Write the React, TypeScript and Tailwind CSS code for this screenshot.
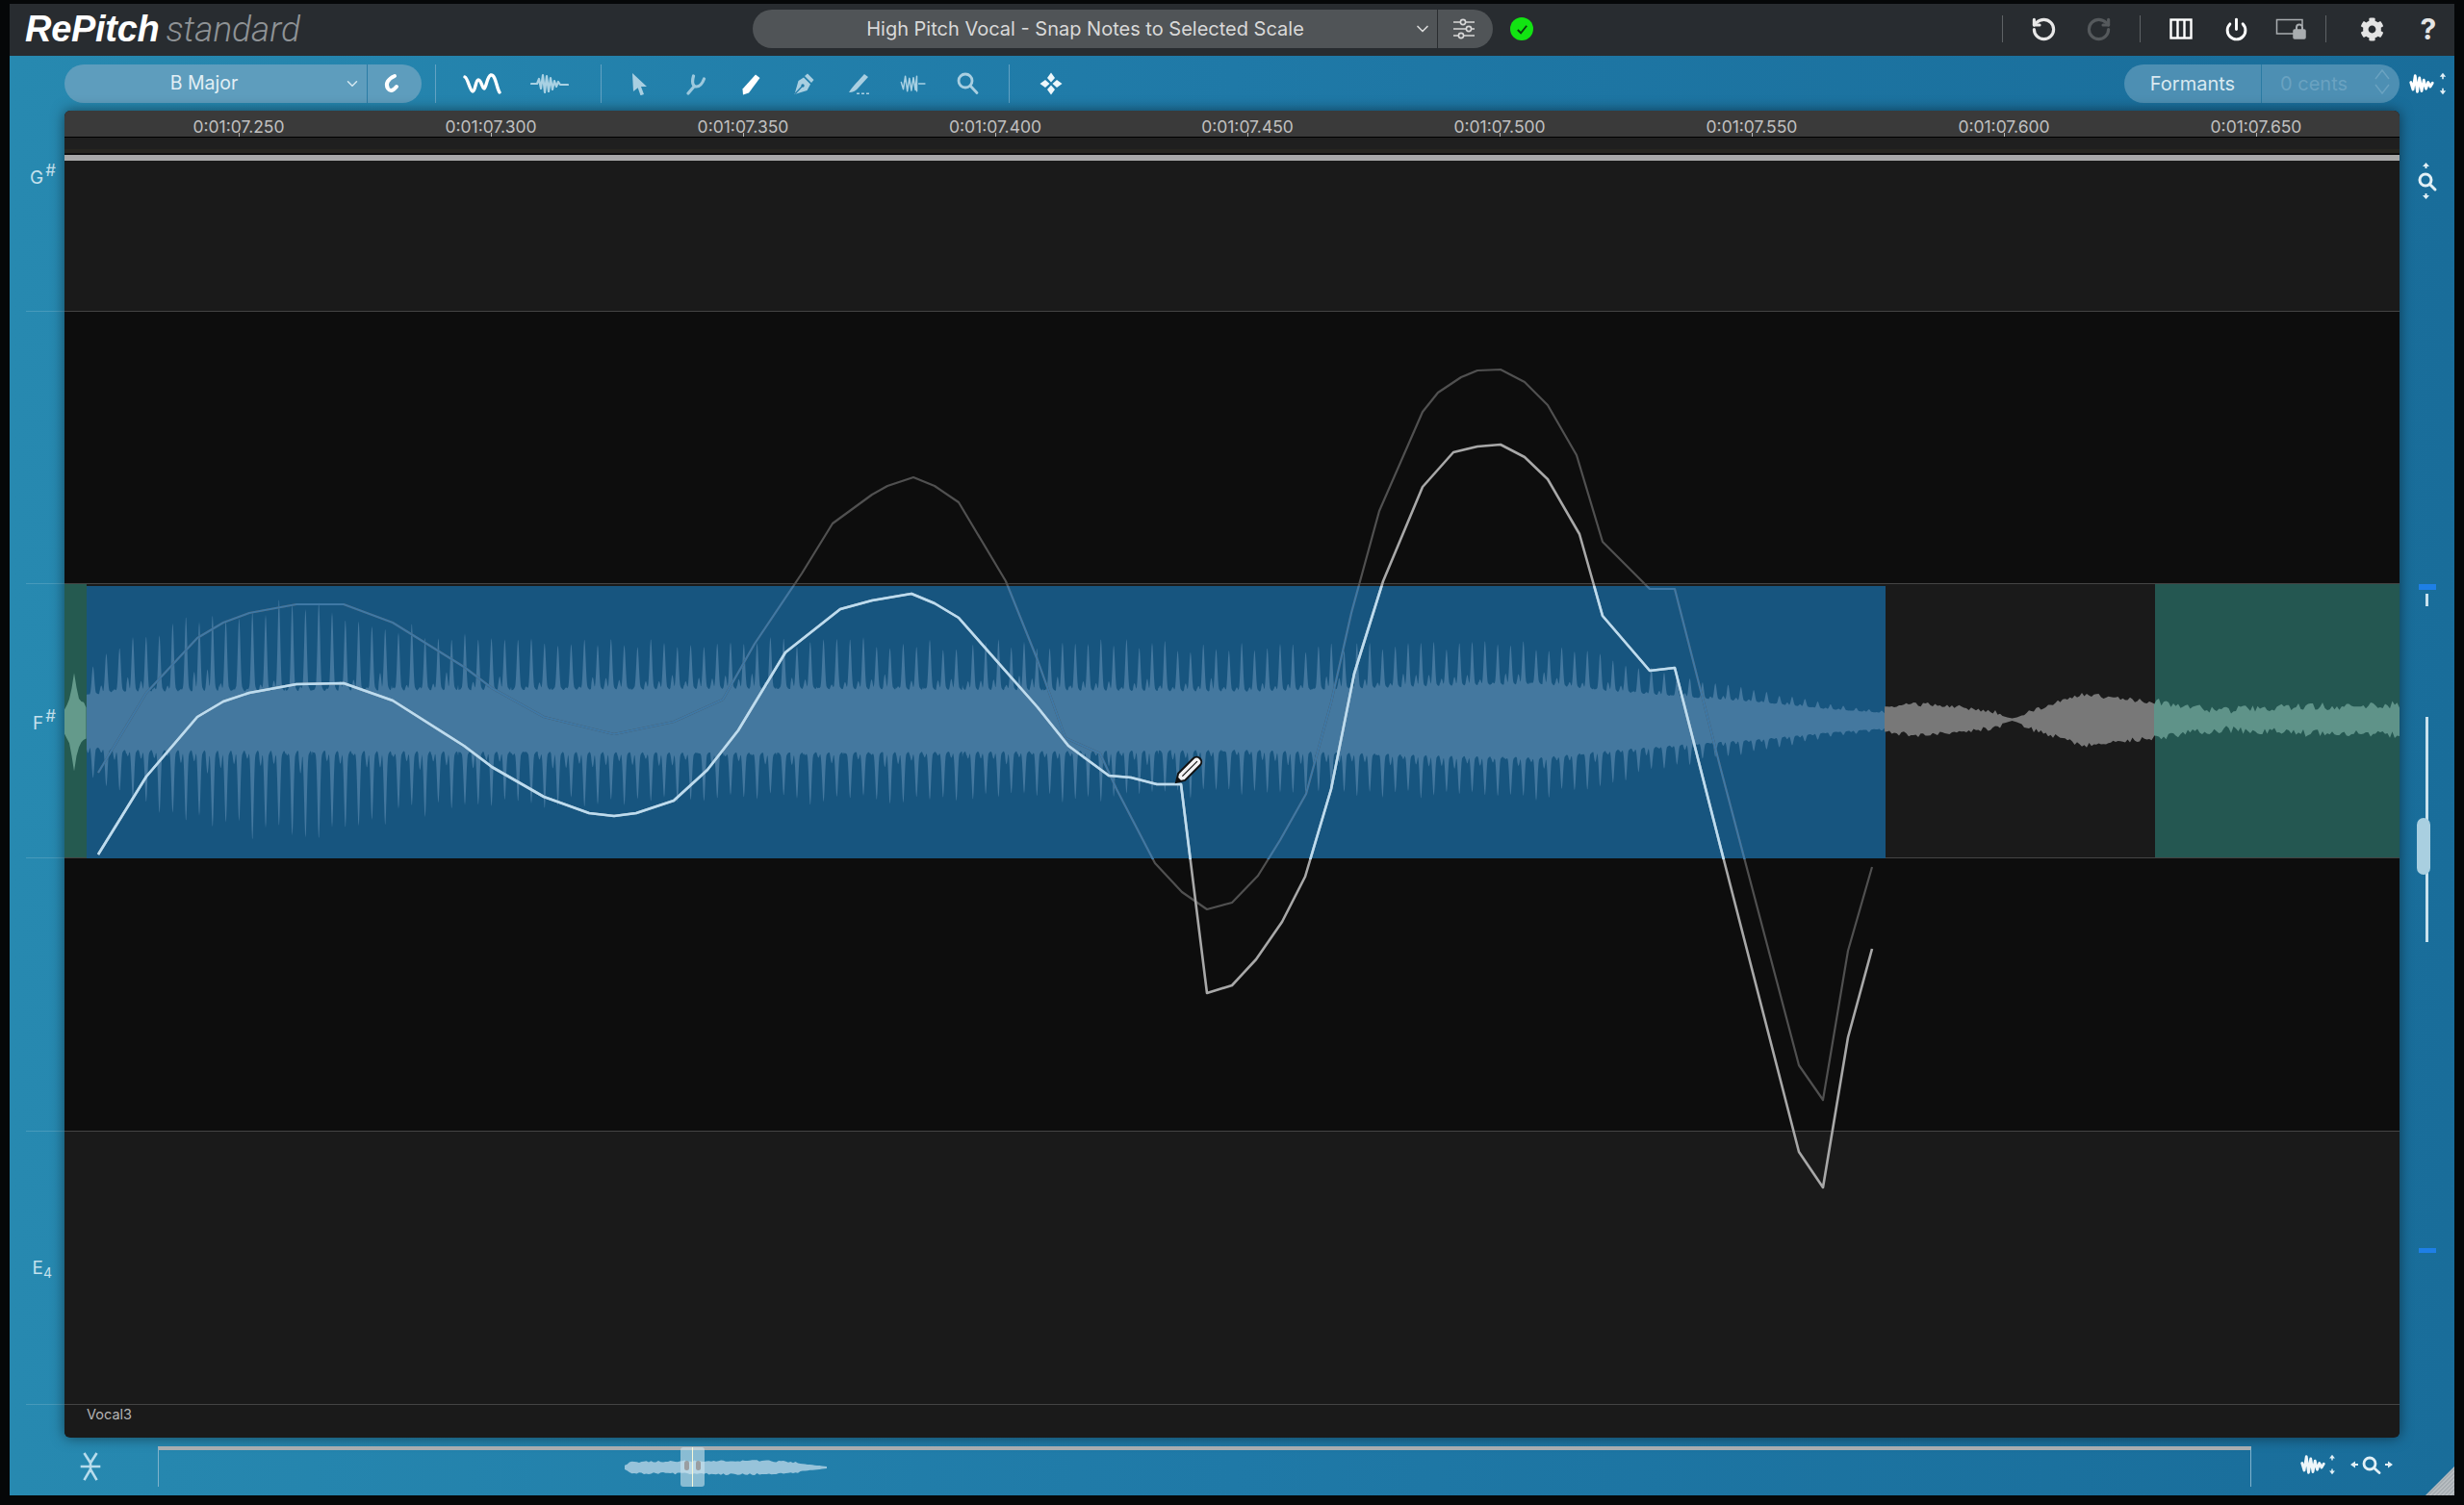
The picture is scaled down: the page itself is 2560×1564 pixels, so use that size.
import { ChevronDown, Power, RotateCcw, RotateCw } from 'lucide-react'
import { FaCog } from 'react-icons/fa'

type Pt = [number, number]

const noise = (i: number) => {
  const s = Math.sin(i * 12.9898) * 43758.5453
  return s - Math.floor(s)
}

const lerp = (keys: Pt[], x: number) => {
  if (x <= keys[0][0]) return keys[0][1]
  for (let i = 1; i < keys.length; i++) {
    if (x <= keys[i][0]) {
      const [x0, y0] = keys[i - 1]
      const [x1, y1] = keys[i]
      return y0 + ((y1 - y0) * (x - x0)) / (x1 - x0)
    }
  }
  return keys[keys.length - 1][1]
}

const line = (pts: Pt[]) => 'M' + pts.map(([x, y]) => `${x} ${y}`).join('L')

const CENTER = 750

const spikeAmp: Pt[] = [
  [90, 55], [110, 72], [150, 95], [200, 115], [260, 128], [300, 132], [340, 125], [400, 110], [450, 100],
  [500, 95], [600, 90], [700, 88], [800, 88], [900, 88], [1000, 84], [1100, 88], [1200, 84], [1300, 82],
  [1500, 84], [1600, 84], [1650, 74], [1700, 60], [1757, 46], [1830, 32], [1900, 18], [1958, 10],
]
const bodyAmp: Pt[] = [
  [90, 26], [120, 30], [800, 33], [1300, 30], [1500, 36], [1600, 38], [1680, 30], [1757, 24], [1830, 19], [1900, 12], [1958, 8],
]

// body plus pitch spikes, one edge at a time
const voicedEdge = (x: number, dir: number) => {
  const period = x < 1000 ? 13.8 : 13.3
  const k = Math.round(x / period)
  const c = Math.abs(Math.cos((Math.PI * x) / period))
  const c2 = Math.abs(Math.cos((Math.PI * (x + period * 0.38)) / period))
  const main = Math.pow(c, 11) * (0.78 + 0.22 * noise(k + dir * 31))
  const side = Math.pow(c2, 14) * 0.3 * noise(k * 3 + dir * 7)
  const base = Math.pow(c, 3) * 0.12
  const amp = lerp(spikeAmp, x)
  const body = lerp(bodyAmp, x)
  return CENTER - 1 - dir * (body + (amp - body) * Math.max(main, side, base))
}

const voicedPath = () => {
  const up: Pt[] = []
  const down: Pt[] = []
  for (let x = 90; x <= 1958; x += 0.5) {
    up.push([x, +voicedEdge(x, 1).toFixed(1)])
    down.unshift([x, +voicedEdge(x, -1).toFixed(1)])
  }
  return line([...up, ...down]) + 'Z'
}

const noisyPath = (from: number, to: number, keys: Pt[], cy: number, rough: number) => {
  const up: Pt[] = []
  const down: Pt[] = []
  for (let x = from; x <= to; x += 2.5) {
    const a = lerp(keys, x)
    const n = noise(Math.round(x) * 0.7) * rough * (a > 4 ? 1 : 0.1)
    const m = noise(Math.round(x) * 1.3) * rough * (a > 4 ? 1 : 0.1)
    up.push([x, +(cy - a - n).toFixed(1)])
    down.unshift([x, +(cy + a + m).toFixed(1)])
  }
  return line([...up, ...down]) + 'Z'
}

const grayEnv: Pt[] = [[1958, 11], [1975, 12], [2000, 14], [2050, 9], [2075, 5], [2091, 1], [2110, 7], [2130, 13], [2165, 24], [2200, 20], [2240, 16]]
const tealEnv: Pt[] = [[2240, 15], [2270, 10], [2310, 6], [2360, 8], [2400, 10], [2450, 10], [2493, 12]]
const headEnv: Pt[] = [[67, 12], [72, 22], [76, 40], [77, 50], [78, 40], [82, 24], [90, 14]]
const miniEnv: Pt[] = [[649, 2], [655, 5], [680, 5], [750, 6], [800, 6], [830, 4], [859, 1]]

const bright: Pt[] = [
  [102, 888], [152, 807], [205, 745], [232, 729], [259, 720], [308, 711], [357, 710], [408, 728], [482, 775],
  [511, 797], [565, 828], [612, 845], [638, 848], [661, 845], [700, 832], [735, 800], [767, 759], [816, 678],
  [873, 633], [906, 624], [947, 617], [971, 627], [996, 642], [1078, 735], [1110, 775], [1152, 806], [1175, 808], [1202, 815], [1227, 815],
  [1254, 1032], [1280, 1024], [1305, 997], [1332, 958], [1356, 911], [1383, 820], [1407, 700], [1437, 604],
  [1478, 506], [1510, 470], [1535, 464], [1559, 462], [1584, 475], [1608, 498], [1641, 555], [1665, 640], [1714, 697], [1740, 694],
  [1788, 882], [1869, 1197], [1894, 1234], [1920, 1078], [1945, 986],
]
const faint: Pt[] = [
  [102, 803], [152, 720], [205, 663], [232, 647], [259, 637], [308, 628], [357, 628], [408, 647], [482, 693],
  [511, 715], [565, 745], [638, 763], [700, 750], [751, 727], [784, 669], [833, 596], [865, 544], [906, 514], [922, 505],
  [949, 496], [971, 505], [996, 522], [1045, 604], [1078, 686], [1107, 767], [1143, 783], [1160, 820], [1200, 897], [1228, 927],
  [1254, 945], [1280, 938], [1307, 910], [1330, 873], [1357, 825], [1383, 730], [1404, 637], [1433, 531],
  [1478, 428], [1494, 408], [1518, 392], [1535, 385], [1559, 384], [1584, 397], [1608, 421], [1638, 473], [1665, 563], [1714, 612], [1740, 612],
  [1788, 800], [1869, 1107], [1894, 1143], [1920, 988], [1945, 901],
]

const Scribble = ({ className, d, sw = 2.2 }: { className?: string; d: string; sw?: number }) => (
  <svg viewBox="0 0 40 28" className={className} fill="none" stroke="currentColor" strokeWidth={sw} strokeLinejoin="round" strokeLinecap="round">
    <path d={d} />
  </svg>
)
const WAVE_LONG = 'M1 14H7L9 9 11 19 13 5 15 23 17 6 19 22 21 8 23 20 25 11 27 17 29 12 31 15H39'
const WAVE_NARROW = 'M5 12 8 22 11 3 14 25 17 6 20 24 23 9 26 21 29 12 32 18 35 13'

const ArrowsV = ({ className }: { className?: string }) => (
  <svg viewBox="0 0 10 30" className={className} fill="currentColor">
    <path d="M5 1 9 6H6v3H4V6H1zM5 29 1 24h3v-3h2v3h3z" />
  </svg>
)

const Pointer = () => (
  <svg viewBox="0 0 24 24" className="w-[24px] h-[24px] text-[#a9cfe1]" fill="currentColor">
    <path d="M5 1 20 15h-6l3 8-3.500 1.200-2.800-8L6 20z" />
  </svg>
)
const Fork = () => (
  <svg viewBox="0 0 24 24" className="w-[24px] h-[24px] text-[#9cc8dd]" fill="none" stroke="currentColor" strokeWidth="3.200" strokeLinecap="round">
    <path d="M4 22 10 15M9.500 4C7.500 11 9 15 12.500 15 16 15 19 11 20.500 7" />
  </svg>
)
const Pencil = () => (
  <svg viewBox="0 0 24 24" className="w-[24px] h-[24px] text-white" fill="currentColor">
    <path d="M17 2.500 21.500 6 10 21.500 4 23.500 3.500 17.500z" />
  </svg>
)
const Nib = () => (
  <svg viewBox="0 0 24 24" className="w-[24px] h-[24px]">
    <path d="M16 1.500 22.500 8 20 11 13 4zM12 5.500 19 12.500 15.500 19 2.500 23 6.500 9z" fill="#a9cfe1" />
    <path d="M3 22.500 10 15" stroke="#1f79a7" strokeWidth="1.200" />
    <circle cx="11" cy="14" r="1.700" fill="#1f79a7" />
  </svg>
)
const LineTool = () => (
  <svg viewBox="0 0 24 24" className="w-[24px] h-[24px] text-[#a9cfe1]" fill="currentColor">
    <path d="M18 2 22 5 12 16C10 19 6 21 2 21 5 16 8 13 18 2zM10 21.500h3V23h-3zM15 21.500h3V23h-3zM20 21.500h3V23h-3z" />
  </svg>
)
const Squiggle = () => (
  <svg viewBox="0 0 40 24" className="w-[40px] h-[24px]" fill="none" stroke="#fff" strokeWidth="3.400" strokeLinecap="round" strokeLinejoin="round">
    <path d="M2 5c3 1 5 14 8 15 3 0 3-12 6-12s4 9 6 9 3-13 7-14c5-1 6 14 9 18" />
  </svg>
)
const Move = () => (
  <svg viewBox="0 0 24 24" className="w-[26px] h-[26px] text-[#eef7fb]" fill="currentColor">
    <path d="M12 .500 16 6 12 10.500 8 6zM12 23.500 8 18l4-4.500 4 4.500zM.500 12 6 8l4.500 4L6 16zM23.500 12 18 16l-4.500-4L18 8z" />
  </svg>
)
const MagnifierIcon = () => (
  <svg viewBox="0 0 24 24" className="w-[25px] h-[25px] text-[#a9cfe1]" fill="none" stroke="currentColor" strokeWidth="2.800" strokeLinecap="round">
    <circle cx="10" cy="9.500" r="7" />
    <path d="M15.500 15 22 22" />
  </svg>
)
const SlidersIcon = () => (
  <svg viewBox="0 0 24 24" className="w-[24px] h-[24px] text-[#d8d8d8]" fill="none" stroke="currentColor" strokeWidth="1.600">
    <path d="M1 5h7M14 5h9M1 12h13M20 12h3M1 19h5M12 19h11" />
    <circle cx="11" cy="5" r="2.600" />
    <circle cx="17" cy="12" r="2.600" />
    <circle cx="9" cy="19" r="2.600" />
  </svg>
)
const ColumnsIcon = () => (
  <svg viewBox="0 0 24 24" className="w-[24px] h-[24px]" fill="none" stroke="#fff" strokeWidth="2.400">
    <rect x="1.500" y="2.500" width="21" height="19" />
    <path d="M8.500 3v18M15.500 3v18" />
  </svg>
)
const ScreenLock = () => (
  <svg viewBox="0 0 32 22" className="w-[32px] h-[22px] text-[#a9adb0]" fill="none" stroke="currentColor" strokeWidth="1.500">
    <path d="M20 16H1.500V1.500H28V8" />
    <rect x="19" y="12" width="12" height="9" rx="1" fill="currentColor" />
    <path d="M22 12V9.500a3 3 0 0 1 6 0V12" strokeWidth="2" />
  </svg>
)
const ZoomVertical = () => (
  <svg viewBox="0 0 24 40" className="w-[24px] h-[40px] text-[#e2f0f6]" fill="none" stroke="currentColor" strokeWidth="3" strokeLinecap="round">
    <path d="M10.500 1 14 5H11.500V7H9.500V5H7zM10.500 39 7 35H9.500V33H11.500V35H14z" fill="currentColor" stroke="none" />
    <circle cx="10" cy="19" r="6" />
    <path d="M15 24 20 29" />
  </svg>
)
const ZoomHorizontal = () => (
  <svg viewBox="0 0 46 20" className="w-[46px] h-[20px] text-[#e2f0f6]" fill="none" stroke="currentColor" strokeWidth="2.800" strokeLinecap="round">
    <path d="M1 10 6 6.500V9H9V11H6V13.500zM45 10 40 13.500V11H37V9H40V6.500z" fill="currentColor" stroke="none" />
    <circle cx="21" cy="9" r="6" />
    <path d="M26 14 31 18.500" />
  </svg>
)

const Divider = ({ className }: { className: string }) => <div className={`w-px shrink-0 ${className}`} />

const ToolSlot = ({ className, children }: { className: string; children: React.ReactNode }) => (
  <div className={`flex items-center justify-center shrink-0 ${className}`}>{children}</div>
)

const times = ['250', '300', '350', '400', '450', '500', '550', '600', '650']

const TopBar = () => (
  <div className="h-[54px] shrink-0 bg-[#282c30] flex items-center relative">
    <div className="ml-[16px] w-[756px] flex items-baseline gap-[7px] shrink-0 mb-[2px]">
      <span className="text-[38px] leading-none font-bold italic text-white tracking-[-0.3px] font-['Liberation_Sans',sans-serif]">RePitch</span>
      <span className="text-[37px] leading-none font-light italic text-[#8f9396] font-['Roboto',sans-serif]">standard</span>
    </div>
    <div className="w-[769px] h-[40px] rounded-full bg-[#505457] flex items-center shrink-0 mb-[2px]">
      <div className="w-[711px] relative flex items-center justify-center text-[20px] text-[#d9d9d9] pr-[20px]">
        <span>High Pitch Vocal - Snap Notes to Selected Scale</span>
        <ChevronDown className="absolute right-[5px] w-[20px] h-[20px] text-[#d9d9d9]" />
      </div>
      <Divider className="h-[40px] bg-[#2a2d30]" />
      <div className="flex-1 flex items-center justify-center pr-[4px]"><SlidersIcon /></div>
    </div>
    <div className="ml-[18px] w-[24px] h-[24px] rounded-full bg-[#12e412] flex items-center justify-center mb-[2px] shrink-0">
      <svg viewBox="0 0 16 16" className="w-[15px] h-[15px]" fill="none" stroke="#0b3a10" strokeWidth="2"><path d="M3 8.500 6.500 12 13 4" /></svg>
    </div>
    <Divider className="ml-[487px] h-[28px] bg-[#5e6265] mb-[2px]" />
    <ToolSlot className="w-[84px] h-[30px] mb-[2px]"><RotateCcw className="w-[27px] h-[27px] text-[#e8e8e8]" strokeWidth={2.800} /></ToolSlot>
    <ToolSlot className="w-[30px] h-[30px] mb-[2px]"><RotateCw className="w-[27px] h-[27px] text-[#55595c]" strokeWidth={2.800} /></ToolSlot>
    <Divider className="ml-[28px] h-[28px] bg-[#5e6265] mb-[2px]" />
    <ToolSlot className="w-[84px] h-[30px] mb-[2px]"><ColumnsIcon /></ToolSlot>
    <ToolSlot className="w-[30px] h-[30px] mb-[2px]"><Power className="w-[25px] h-[25px] text-white" strokeWidth={2.800} /></ToolSlot>
    <ToolSlot className="w-[42px] h-[30px] ml-[21px] mb-[2px]"><ScreenLock /></ToolSlot>
    <Divider className="ml-[15px] h-[28px] bg-[#5e6265] mb-[2px]" />
    <ToolSlot className="w-[94px] h-[30px] mb-[2px]"><FaCog className="w-[25px] h-[25px] text-[#e4e4e4]" /></ToolSlot>
    <span className="w-[24px] text-center text-[30px] leading-none font-bold text-[#e4e4e4] mb-[2px]">?</span>
  </div>
)

const Toolbar = () => (
  <div className="h-[57px] shrink-0 flex items-center pl-[57px] relative">
    <div className="w-[371px] h-[40px] rounded-full bg-[#5e9dbd] flex items-center shrink-0">
      <div className="w-[314px] relative flex items-center justify-center text-[19.500px] text-[#e2eff5] pr-[24px] pt-[1px]">
        B Major
        <ChevronDown className="absolute right-[6px] w-[18px] h-[18px] text-[#d5e8f1]" />
      </div>
      <Divider className="h-[40px] bg-[#2b7ca6]" />
      <div className="flex-1 flex items-center justify-center pr-[6px]">
        <svg viewBox="0 0 24 24" className="w-[24px] h-[24px]" fill="none" stroke="#fff" strokeWidth="4" strokeLinecap="round">
          <path d="M15 4C8 7 5 12 8 17c2 3 5 3 9-2" />
        </svg>
      </div>
    </div>
    <Divider className="ml-[14px] h-[40px] bg-[#62a2c3]" />
    <ToolSlot className="w-[95px]"><Squiggle /></ToolSlot>
    <ToolSlot className="w-[45px]"><Scribble className="w-[40px] h-[28px] text-[#a9d1e3]" d={WAVE_LONG} /></ToolSlot>
    <Divider className="ml-[31px] h-[40px] bg-[#62a2c3]" />
    <ToolSlot className="w-[38px] ml-[20px]"><Pointer /></ToolSlot>
    <ToolSlot className="w-[24px] ml-[28px]"><Fork /></ToolSlot>
    <ToolSlot className="w-[24px] ml-[33px]"><Pencil /></ToolSlot>
    <ToolSlot className="w-[24px] ml-[31px]"><Nib /></ToolSlot>
    <ToolSlot className="w-[24px] ml-[33px]"><LineTool /></ToolSlot>
    <ToolSlot className="w-[28px] ml-[31px]"><Scribble className="w-[32px] h-[28px] text-[#a9d1e3]" d="M2 12 5 22 8 3 11 25 14 6 17 24 20 5 23 23 25 3V25M28 14H37" /></ToolSlot>
    <ToolSlot className="w-[24px] ml-[30px]"><MagnifierIcon /></ToolSlot>
    <Divider className="ml-[31px] h-[40px] bg-[#62a2c3]" />
    <ToolSlot className="w-[24px] ml-[31px]"><Move /></ToolSlot>
    <div className="ml-[1103px] w-[286px] h-[40px] rounded-full bg-[#4d8fb3] flex items-center shrink-0">
      <div className="w-[142px] text-center text-[20px] text-[#d9e9f1] pt-[1px]">Formants</div>
      <Divider className="h-[40px] bg-[#2a7ba3]" />
      <div className="flex-1 relative pl-[19px] text-[20px] text-[#6ea5c3] opacity-90 pt-[1px]">
        0 cents
        <svg viewBox="0 0 18 32" className="absolute right-[9px] top-[-2px] w-[18px] h-[32px]" fill="none" stroke="#6ea5c3" strokeWidth="1.500">
          <path d="M2 13 9 4l7 9M2 19l7 9 7-9" />
        </svg>
      </div>
    </div>
    <div className="ml-[8px] flex items-center gap-[3px]">
      <Scribble className="w-[30px] h-[28px] text-white" d={WAVE_NARROW} sw={3.800} />
      <ArrowsV className="w-[8px] h-[24px] text-[#e2f0f6]" />
    </div>
  </div>
)

const NoteLabel = ({ note, mark, sub }: { note: string; mark?: string; sub?: string }) => (
  <div className="flex items-start justify-end pr-[9px] text-[#c4e0ec] text-[19px] leading-none">
    <span>{note}</span>
    {mark && <span className="text-[17px] ml-[2px] mt-[-6px]">{mark}</span>}
    {sub && <span className="text-[14px] mt-[8px] mr-[4px]">{sub}</span>}
  </div>
)

const LeftColumn = () => (
  <div className="w-[57px] shrink-0 flex flex-col pt-[52px] pl-[17px]">
    <div className="h-[156px] pt-[8px]"><NoteLabel note="G" mark="#" /></div>
    <div className="h-[283px] border-t border-white/15" />
    <div className="h-[286px] border-t border-white/15 border-b flex items-center justify-end"><div className="mt-[5px]"><NoteLabel note="F" mark="#" /></div></div>
    <div className="h-[283px]" />
    <div className="h-[284px] border-t border-white/15 flex items-center justify-end"><div className="mt-[2px]"><NoteLabel note="E" sub="4" /></div></div>
    <div className="h-[34px] border-t border-white/15" />
  </div>
)

const RightColumn = () => (
  <div className="w-[57px] shrink-0 relative flex flex-col items-center">
    <div className="mt-[53px] flex justify-center"><ZoomVertical /></div>
    <div className="mt-[399px] w-[18px] h-[6px] bg-[#1e7fe6] shrink-0" />
    <div className="mt-[4px] w-[3px] h-[13px] bg-[#c9e2ee] shrink-0" />
    <div className="mt-[115px] w-[3px] h-[234px] bg-[#c9e2ee] relative shrink-0">
      <div className="absolute left-[-9px] top-[105px] w-[14px] h-[59px] rounded-full bg-[#a9cfe0]" />
    </div>
    <div className="mt-[318px] w-[18px] h-[5px] bg-[#1e7fe6] shrink-0" />
  </div>
)

const PitchOverlay = () => (
  <svg viewBox="67 167 2426 1327" className="absolute left-0 bottom-0 w-[2426px] h-[1327px] pointer-events-none">
    <defs>
      <clipPath id="blueZone"><rect x="67" y="609" width="1892" height="284" /></clipPath>
    </defs>
    <path d={noisyPath(67, 90, headEnv, CENTER, 3)} fill="#649a8b" />
    <path d={voicedPath()} fill="#44789f" />
    <path d={noisyPath(1958, 2240, grayEnv, 748, 5)} fill="#787878" />
    <path d={noisyPath(2238, 2493, tealEnv, 748, 8)} fill="#5f9389" />
    <path d={line(faint)} fill="none" stroke="#505050" strokeWidth="2.200" strokeLinejoin="round" />
    <path d={line(faint)} fill="none" stroke="#3f78a5" strokeWidth="2.200" strokeLinejoin="round" clipPath="url(#blueZone)" />
    <path d={line(bright)} fill="none" stroke="#a8a8a8" strokeWidth="2.600" strokeLinejoin="round" />
    <path d={line(bright)} fill="none" stroke="#bcdcf0" strokeWidth="2.600" strokeLinejoin="round" clipPath="url(#blueZone)" />
    <g transform="translate(1222 813) rotate(-45)">
      <path d="M0 0 8 -5H30a5 5 0 0 1 0 10H8z" fill="#f4f4f4" stroke="#111" strokeWidth="2" />
      <path d="M0 0 5 -3V3z" fill="#111" />
      <path d="M9 0H31" stroke="#111" strokeWidth="1.200" />
    </g>
  </svg>
)

const Panel = () => (
  <div className="w-[2426px] shrink-0 rounded-[6px] overflow-hidden bg-[#1a1a1a] shadow-[0_0_14px_rgba(0,0,0,0.5)] flex flex-col relative">
    <div className="h-[27px] bg-[#3a3a3a] flex shrink-0 pl-[50px]">
      {times.map((t) => (
        <div key={t} className="w-[262px] shrink-0 relative text-center text-[#c0c0c0] text-[17.500px] leading-[34px] h-[27px]">
          0:01:07.{t}
          <div className="absolute left-1/2 bottom-0 w-px h-[4px] bg-[#bbbbbb]" />
        </div>
      ))}
    </div>
    <div className="h-px bg-black shrink-0" />
    <div className="h-[12px] bg-[#1f1f1f] shrink-0" />
    <div className="h-[4px] bg-[#272620] shrink-0" />
    <div className="h-[2px] bg-[#0f0f0f] shrink-0" />
    <div className="h-[6px] bg-[#a9a9a9] shrink-0" />
    <div className="h-[156px] bg-[#1a1a1a] shrink-0" />
    <div className="h-[283px] bg-[#0d0d0d] border-t border-[#444444] shrink-0" />
    <div className="h-[286px] flex shrink-0 border-t border-[#444444] border-b bg-[#1a1a1a]">
      <div className="w-[23px] bg-[#255a50] h-full shrink-0" />
      <div className="w-[1869px] bg-[#17557f] h-[287px] mt-[2px] shrink-0 border-b-2 border-[#2d79a8]" />
      <div className="w-[280px] shrink-0" />
      <div className="flex-1 bg-[#245751]" />
    </div>
    <div className="h-[283px] bg-[#0d0d0d] shrink-0" />
    <div className="h-[284px] bg-[#1a1a1a] border-t border-[#444444] shrink-0" />
    <div className="h-[34px] bg-[#1a1a1a] border-t border-[#444444] shrink-0 pl-[23px] text-[14.500px] text-[#b5b5b5] leading-[20px]">Vocal3</div>
    <PitchOverlay />
  </div>
)

const BottomBar = () => (
  <div className="h-[60px] shrink-0 flex relative">
    <div className="w-[154px] shrink-0 flex items-center justify-center pl-[14px]">
      <svg viewBox="0 0 24 32" className="w-[24px] h-[30px]" fill="none" stroke="#b7dcec" strokeWidth="2.800">
        <path d="M5 1 12 12 19 1M12 12v4M1 16h22M12 16v3M5 31l7-12 7 12" />
      </svg>
    </div>
    <div className="w-[2175px] h-[42px] mt-[9px] shrink-0 border-x border-[#7fb2cc] border-t-4 border-t-[#a9adb0] relative">
      <svg viewBox="649 1510 210 30" className="absolute left-[484px] top-[3px] w-[210px] h-[30px]">
        <path d={noisyPath(649, 859, miniEnv, 1525, 2)} fill="#97c3da" />
      </svg>
      <div className="absolute left-[542px] top-[-3px] w-[25px] h-[41px] rounded-[3px] bg-[#cfe4ee]/60 flex items-center justify-center gap-[7px]">
        <div className="w-[5px] h-[10px] rounded-full bg-[#9a9ea1] mb-[4px]" />
        <div className="w-[5px] h-[10px] rounded-full bg-[#9a9ea1] mb-[4px]" />
        <div className="absolute left-[12px] top-0 bottom-0 w-px bg-[#f4f7d8]" />
      </div>
    </div>
    <div className="flex items-center ml-[49px] gap-[1px] mb-[4px]">
      <Scribble className="w-[30px] h-[28px] text-[#eef6fa]" d={WAVE_NARROW} sw={3.800} />
      <ArrowsV className="w-[8px] h-[22px] text-[#e2f0f6]" />
    </div>
    <div className="flex items-center ml-[14px] mb-[4px]"><ZoomHorizontal /></div>
    <svg viewBox="0 0 30 30" className="absolute right-0 bottom-0 w-[30px] h-[30px]">
      <defs>
        <pattern id="grip" width="3" height="3" patternUnits="userSpaceOnUse" patternTransform="rotate(45)">
          <rect width="3" height="3" fill="#a6adb2" />
          <rect width="1" height="3" fill="#c2c6c9" />
        </pattern>
      </defs>
      <path d="M30 0V30H0z" fill="url(#grip)" />
    </svg>
  </div>
)

export default function App() {
  return (
    <div className="w-[2560px] h-[1564px] bg-[#050708] pt-[4px] px-[10px] pb-[10px] flex flex-col font-['Inter',sans-serif] overflow-hidden">
      <TopBar />
      <div className="h-[1496px] shrink-0 flex flex-col bg-gradient-to-r from-[#2789b0] via-[#1f79a7] to-[#196d9a]">
        <Toolbar />
        <div className="flex flex-1 min-h-0">
          <LeftColumn />
          <Panel />
          <RightColumn />
        </div>
        <BottomBar />
      </div>
    </div>
  )
}
